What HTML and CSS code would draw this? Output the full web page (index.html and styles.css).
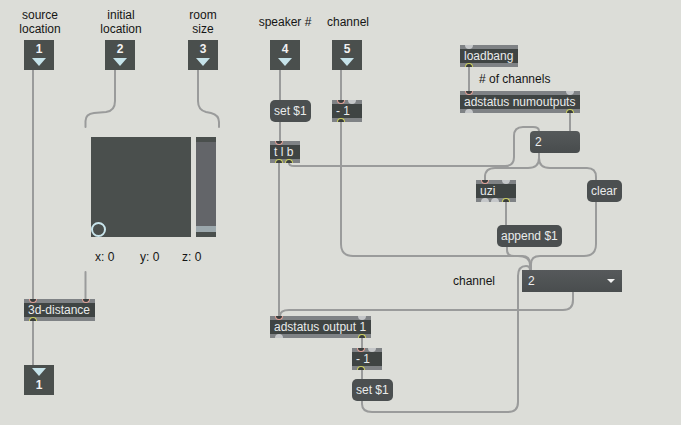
FILE: index.html
```html
<!DOCTYPE html>
<html>
<head>
<meta charset="utf-8">
<link rel="stylesheet" href="styles.css">
</head>
<body>
<div class="patcher">
  <svg class="cables" width="681" height="425" viewBox="0 0 681 425">
    <g class="cable">
      <path d="M33,70 V299"/>
      <path d="M33,321 V365"/>
      <path d="M115,70 V101 Q115,111 106,112 L94,113 Q85.5,114 85.5,121 V127"/>
      <path d="M85.5,272 V299"/>
      <path d="M198,70 V101 Q198,110 206,112 L211,113 Q219,115 219,122 V127"/>
      <path d="M280,70 V100"/>
      <path d="M280,122 V141"/>
      <path d="M341,70 V100"/>
      <path d="M341,122 V244 Q341,256 353,256 L518,256 Q530,256 530,265 V270"/>
      <path d="M279,163 V316"/>
      <path d="M289,163 Q289,166 294,166 L505,166 Q514,166 514,157 V136 Q514,127 523,127 L533,127 Q539,127 539,131"/>
      <path d="M469,67 V91"/>
      <path d="M570,113 V131"/>
      <path d="M539,153 V158 Q539,168 528,168 L495,168 Q485,168 485,177 V180"/>
      <path d="M539,153 V158 Q539,168 550,168 L587,168 Q596,168 596,177 V180"/>
      <path d="M506,202 V225"/>
      <path d="M507,247 V250 Q507,256 514,256 L522,256 Q530,256 530,264 V270"/>
      <path d="M596,202 V244 Q596,256 584,256 L540,256 Q531,256 531,264 V270"/>
      <path d="M573,292 V300 Q573,310 563,310 L289,310 Q280,310 280,316"/>
      <path d="M362,338 V348"/>
      <path d="M362,369 V379"/>
      <path d="M362,401 V404 Q362,412 372,412 L508,412 Q518,412 518,402 V276 Q518,266 526,266 Q530,266 530,270"/>
    </g>
  </svg>

  <div class="label lbl-source">source<br>location</div>
  <div class="label lbl-initial">initial<br>location</div>
  <div class="label lbl-room">room<br>size</div>
  <div class="label lbl-speaker">speaker #</div>
  <div class="label lbl-channel">channel</div>
  <div class="label lbl-numch"># of channels</div>
  <div class="label lbl-channel2">channel</div>
  <div class="label lbl-x">x: 0</div>
  <div class="label lbl-y">y: 0</div>
  <div class="label lbl-z">z: 0</div>

  <div class="io io-in in1"><span class="num">1</span><span class="tri"></span></div>
  <div class="io io-in in2"><span class="num">2</span><span class="tri"></span></div>
  <div class="io io-in in3"><span class="num">3</span><span class="tri"></span></div>
  <div class="io io-in in4"><span class="num">4</span><span class="tri"></span></div>
  <div class="io io-in in5"><span class="num">5</span><span class="tri"></span></div>
  <div class="io io-out out1"><span class="tri"></span><span class="num">1</span></div>

  <div class="pad"><span class="puck"></span></div>
  <div class="zslider">
    <span class="zs-top"></span>
    <span class="zs-body"></span>
    <span class="zs-knob"></span>
    <span class="zs-bottom"></span>
  </div>

  <div class="obj o-dist">3d-distance
    <span class="port pin on x5"></span>
    <span class="port pin on x58"></span>
    <span class="port pout on x5"></span>
  </div>

  <div class="obj o-loadbang">loadbang
    <span class="port pin x5"></span>
    <span class="port pout on x5"></span>
  </div>

  <div class="obj o-numout">adstatus numoutputs
    <span class="port pin on x5"></span>
    <span class="port pin x106"></span>
    <span class="port pout x5"></span>
    <span class="port pout on x106"></span>
  </div>

  <div class="obj o-minus1">- 1
    <span class="port pin on x5"></span>
    <span class="port pin x16"></span>
    <span class="port pout on x5"></span>
  </div>

  <div class="obj o-tlb">t l b
    <span class="port pin on x5"></span>
    <span class="port pout on x5"></span>
    <span class="port pout on x15"></span>
  </div>

  <div class="obj o-uzi">uzi
    <span class="port pin on x5"></span>
    <span class="port pin x26"></span>
    <span class="port pout x5"></span>
    <span class="port pout x15"></span>
    <span class="port pout on x26"></span>
  </div>

  <div class="obj o-out1">adstatus output 1
    <span class="port pin on x5"></span>
    <span class="port pin x88"></span>
    <span class="port pout x5"></span>
    <span class="port pout on x88"></span>
  </div>

  <div class="obj o-minus2">- 1
    <span class="port pin on x5"></span>
    <span class="port pin x16"></span>
    <span class="port pout on x5"></span>
  </div>

  <div class="msg m-set1">set $1</div>
  <div class="msg m-clear">clear</div>
  <div class="msg m-append">append $1</div>
  <div class="msg m-set2">set $1</div>

  <div class="numbox">2</div>
  <div class="umenu"><span>2</span><span class="dd"></span></div>
</div>
</body>
</html>
```
FILE: styles.css
```css
html, body {
  margin: 0;
  padding: 0;
  background: #dcddd8;
}

.patcher {
  position: relative;
  width: 681px;
  height: 425px;
  overflow: hidden;
  background: #dcddd8;
  font-family: "Liberation Sans", Arial, sans-serif;
  font-size: 12px;
}

.cables {
  position: absolute;
  left: 0;
  top: 0;
}

.cable path {
  fill: none;
  stroke: #9a9b9b;
  stroke-width: 2;
  stroke-linecap: round;
}

.label {
  position: absolute;
  color: #151515;
  line-height: 14px;
  white-space: nowrap;
}

.lbl-source, .lbl-initial, .lbl-room, .lbl-speaker, .lbl-channel {
  text-align: center;
  width: 80px;
}
.lbl-source { left: 0px; top: 8px; }
.lbl-initial { left: 81px; top: 8px; }
.lbl-room { left: 163px; top: 8px; }
.lbl-speaker { left: 245px; top: 15px; }
.lbl-channel { left: 308px; top: 15px; }
.lbl-numch { left: 479px; top: 72px; }
.lbl-channel2 { left: 453px; top: 274px; }
.lbl-x { left: 95px; top: 250px; }
.lbl-y { left: 140px; top: 250px; }
.lbl-z { left: 182px; top: 250px; }

/* inlet / outlet objects */
.io {
  position: absolute;
  width: 30px;
  height: 30px;
  background: #4a4f4d;
  display: flex;
  flex-direction: column;
  align-items: center;
  box-sizing: border-box;
}
.io .num {
  color: #f2f2f2;
  font-weight: bold;
  line-height: 14px;
}
.io .tri {
  width: 0;
  height: 0;
  border-left: 7px solid transparent;
  border-right: 7px solid transparent;
  border-top: 8px solid #c6e3ea;
}
.io-in { padding-top: 2px; }
.io-in .tri { margin-top: 2px; }
.io-out { padding-top: 3px; }
.io-out .num { margin-top: 2px; }

.in1 { left: 24px; top: 40px; }
.in2 { left: 105px; top: 40px; }
.in3 { left: 188px; top: 40px; }
.in4 { left: 270px; top: 40px; }
.in5 { left: 332px; top: 40px; }
.out1 { left: 24px; top: 365px; }

/* 2d pad + z slider */
.pad {
  position: absolute;
  left: 91px;
  top: 137px;
  width: 100px;
  height: 100px;
  background: #4a4f4d;
}
.puck {
  position: absolute;
  left: 0;
  top: 85px;
  width: 15px;
  height: 15px;
  box-sizing: border-box;
  border: 2px solid #c9e5ec;
  border-radius: 50%;
}
.zslider {
  position: absolute;
  left: 196px;
  top: 137px;
  width: 20px;
  height: 100px;
  display: flex;
  flex-direction: column;
}
.zs-top { height: 5px; background: #4a4f4d; }
.zs-body { flex: 1; background: #636569; }
.zs-knob { height: 6px; background: #9ba7ac; }
.zs-bottom { height: 5px; background: #4a4f4d; }

/* object boxes */
.obj {
  position: absolute;
  height: 22px;
  box-sizing: border-box;
  background: #3f4443;
  border-top: 4px solid #7f8285;
  border-bottom: 4px solid #7f8285;
  color: #e9ebeb;
  line-height: 14px;
  padding: 0 4px;
  white-space: nowrap;
}
.port {
  position: absolute;
  width: 8px;
  height: 4px;
  box-sizing: border-box;
}
.x5 { left: 5px; }
.x15 { left: 15px; }
.x16 { left: 16px; }
.x26 { left: 26px; }
.x58 { left: 58px; }
.x88 { left: 88px; }
.x106 { left: 106px; }
.pin {
  top: -4px;
  border-radius: 0 0 4px 4px;
  background: #c5c7c9;
}
.pout {
  bottom: -4px;
  border-radius: 4px 4px 0 0;
  background: #c5c7c9;
}
.pin.on {
  background: #3a3e3e;
  border: 1.5px solid #e3a197;
  border-top: none;
}
.pout.on {
  background: #3a3e3e;
  border: 1.5px solid #cdd05e;
  border-bottom: none;
}

.o-dist { left: 24px; top: 299px; width: 71px; }
.o-loadbang { left: 460px; top: 45px; width: 58px; }
.o-numout { left: 460px; top: 91px; width: 120px; }
.o-minus1 { left: 332px; top: 100px; width: 30px; }
.o-tlb { left: 270px; top: 141px; width: 30px; }
.o-uzi { left: 476px; top: 180px; width: 40px; }
.o-out1 { left: 270px; top: 316px; width: 101px; }
.o-minus2 { left: 352px; top: 348px; width: 30px; }

/* message boxes */
.msg {
  position: absolute;
  height: 22px;
  box-sizing: border-box;
  background: #4b4f50;
  border-radius: 5px;
  color: #e9ebeb;
  line-height: 22px;
  padding: 0 4px;
  white-space: nowrap;
}
.m-set1 { left: 270px; top: 100px; width: 41px; }
.m-clear { left: 587px; top: 180px; width: 35px; }
.m-append { left: 497px; top: 225px; width: 65px; }
.m-set2 { left: 352px; top: 379px; width: 41px; }

/* number box */
.numbox {
  position: absolute;
  left: 530px;
  top: 131px;
  width: 50px;
  height: 22px;
  box-sizing: border-box;
  border-radius: 4px;
  background: linear-gradient(#55595a, #484c4d);
  color: #eeeeee;
  line-height: 22px;
  padding-left: 5px;
}

/* umenu */
.umenu {
  position: absolute;
  left: 522px;
  top: 270px;
  width: 100px;
  height: 22px;
  box-sizing: border-box;
  background: linear-gradient(#56595b, #494d4e);
  color: #eeeeee;
  line-height: 22px;
  padding: 0 7px 0 6px;
  display: flex;
  justify-content: space-between;
  align-items: center;
}
.umenu .dd {
  width: 0;
  height: 0;
  border-left: 4px solid transparent;
  border-right: 4px solid transparent;
  border-top: 4px solid #f2f2f2;
}
```
